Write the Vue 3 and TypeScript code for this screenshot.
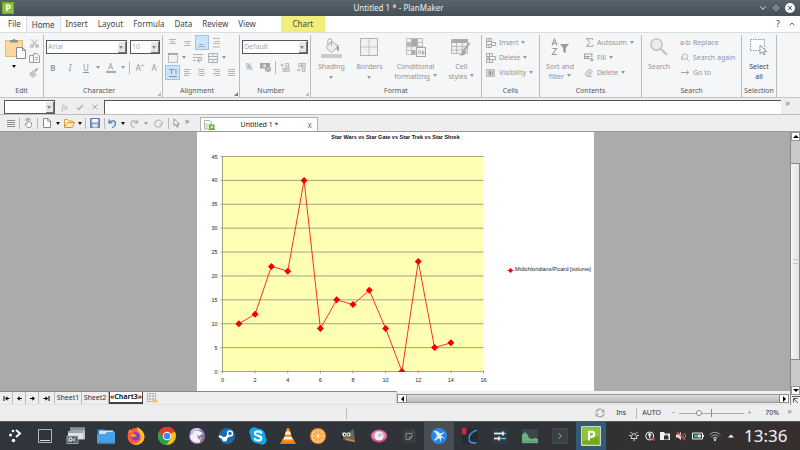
<script setup lang="ts">
import { computed, h, ref } from 'vue'

interface Glyph { w: number; h: number; body: string }

const glyphs: Record<string, Glyph> = {
  app: { w: 12, h: 12, body: '<rect width="12" height="12" fill="#76a91f"/><rect x="1" y="1" width="10" height="10" fill="#8cc63a"/><path d="M4.7 9V3.2h1.8a1.5 1.5 0 0 1 0 3.2H4.7" fill="none" stroke="#fff" stroke-width="1.5"/>' },
  down: { w: 8, h: 8, body: '<path d="M1.2 2.5 4 5.3 6.8 2.5" fill="none" stroke="#dfe3e6"/>' },
  diamond: { w: 8, h: 8, body: '<path d="M4 1.500 6.500 4 4 6.500 1.500 4z" fill="none" stroke="#cfd4d8"/>' },
  close: { w: 10, h: 10, body: '<circle cx="5" cy="5" r="5" fill="#fcfcfc"/><path d="M3 3 7 7M7 3 3 7" stroke="#4a545c" stroke-width="1"/>' },
  collapse: { w: 8, h: 8, body: '<path d="M1.5 5.3 4 3 6.5 5.3" fill="none" stroke="#666"/>' },
  paste: { w: 21, h: 21, body: '<rect x="0.5" y="2.5" width="17" height="16" fill="#fcd9a0" stroke="#e6bb78"/><path d="M5 4.5V2.3h2.3a1.8 1.8 0 0 1 3.4 0H13v2.2z" fill="#8d8f91"/><path d="M11.5 9.5h6l3 3v8h-9z" fill="#fff" stroke="#888"/><path d="M17.5 9.5v3h3" fill="none" stroke="#888"/>' },
  cut: { w: 9, h: 9, body: '<g fill="none" stroke="#a4a6a8"><path d="M1.3.5 6.3 6M7.7.5 2.7 6"/><circle cx="1.9" cy="7" r="1.4"/><circle cx="7.1" cy="7" r="1.4"/></g>' },
  copy: { w: 11, h: 11, body: '<g fill="#f5f6f8" stroke="#9c9ea0"><path d="M.5 2.5h4l2 2v5h-6z"/><path d="M4.5.5h3.500l2.500 2.500v6.500h-6z"/></g><path d="M6 4.500h3M6 6.500h3" stroke="#aaa"/>' },
  brush: { w: 10, h: 10, body: '<path d="M8.500.5 5.500 3.500" stroke="#aaa" stroke-width="2"/><path d="M3.300 2.300 7.700 6.700 6.500 7.500 2.500 3.500z" fill="#b0b2b4"/><path d="M2 4 6 8 3.500 9.500.3 6z" fill="#c4c6c8" stroke="#b5b7b9" stroke-width=".6"/>' },
  top: { w: 8, h: 10, body: '<path d="M0 1.500h7M1.500 3.500h4M0 5.500h7" stroke="#b3b5b7"/>' },
  middle: { w: 8, h: 10, body: '<path d="M0 3.500h7M1.500 5.500h4M0 7.500h7" stroke="#b3b5b7"/>' },
  bottom: { w: 8, h: 10, body: '<path d="M1.500 6.500h4M0 8.500h7" stroke="#94a9bf"/>' },
  spread: { w: 8, h: 10, body: '<path d="M0 .5h7M1.500 3.500h5M0 5.500h7M0 9h7" stroke="#b3b5b7"/>' },
  frame: { w: 10, h: 10, body: '<rect x=".5" y=".5" width="9" height="9" fill="#f0f1f2" stroke="#bbb"/><path d="M0 1h10" stroke="#999" stroke-width="1.500"/>' },
  wrap: { w: 10, h: 10, body: '<path d="M0 1.500h10M0 4.500h8.500v3H5M0 7.500h3" fill="none" stroke="#abadaf"/><path d="m6.500 5.500-2 2 2 2" fill="none" stroke="#999"/>' },
  merge: { w: 10, h: 10, body: '<path d="M.5.5h9v9h-9zM.5 3.500h9M.5 6.500h9M5 .5v3M5 6.500v3" fill="none" stroke="#adafb1"/>' },
  t1: { w: 10, h: 10, body: '<path d="M1 1.500h5M3.500 1.500V6M8 1.500V6M1 8.500h8" fill="none" stroke="#7e97b2"/><path d="M7 2.500 8 1.500" stroke="#7e97b2"/>' },
  left: { w: 8, h: 8, body: '<path d="M0 .5h7M0 2.500h5M0 4.500h7M0 6.500h5" stroke="#b3b5b7"/>' },
  center: { w: 8, h: 8, body: '<path d="M0 .5h7M1 2.500h5M0 4.500h7M1 6.500h5" stroke="#b3b5b7"/>' },
  right: { w: 8, h: 8, body: '<path d="M0 .5h7M2 2.500h5M0 4.500h7M2 6.500h5" stroke="#b3b5b7"/>' },
  justify: { w: 8, h: 8, body: '<path d="M0 .5h7M0 2.500h7M0 4.500h7M0 6.500h7" stroke="#b3b5b7"/>' },
  cash: { w: 11, h: 10, body: '<rect width="10" height="5.500" y="1" fill="#a2a4a6"/><circle cx="4.500" cy="3.700" r="1.500" fill="#e3e4e5"/><ellipse cx="8" cy="6" rx="2.500" ry="1.200" fill="#c8c9ca" stroke="#999" stroke-width=".6"/><path d="M5.500 6v2.500c0 1.500 5 1.500 5 0V6" fill="#b9babb" stroke="#999" stroke-width=".6"/>' },
  decPlus: { w: 9, h: 9, body: '<g fill="none" stroke="#a6a8aa" stroke-width=".9"><path d="M0 2h3M1.500.7 0 2 1.500 3.300"/><rect x="5" y=".6" width="2.600" height="3"/><rect x="2" y="5.300" width="2.400" height="3"/><rect x="5.800" y="5.300" width="2.400" height="3"/></g>' },
  decMinus: { w: 9, h: 9, body: '<g fill="none" stroke="#a6a8aa" stroke-width=".9"><path d="M0 7h3M1.700 5.700 3 7 1.700 8.300"/><rect x="2" y=".6" width="2.400" height="3"/><rect x="5.800" y=".6" width="2.400" height="3"/><rect x="5.200" y="5.300" width="2.600" height="3"/></g>' },
  shading: { w: 21, h: 20, body: '<rect x="0" y="16" width="21" height="4" fill="#c9cbcc"/><path d="M5 9.500 11 3l6 5.500-6.500 6z" fill="#eceded" stroke="#a5a7a9"/><path d="M10.500 8V2.500a1.800 1.800 0 0 0-3.600 0V7" fill="none" stroke="#a5a7a9"/><path d="M16 6.500c2 1 2.500 3.500 1.500 7-1.800-1-2-3-1.500-4.500z" fill="#999"/>' },
  borders: { w: 18, h: 18, body: '<rect x=".5" y=".5" width="17" height="17" fill="#f0f1f2" stroke="#b0b2b4"/><path d="M9 1v16M1 9h16" stroke="#c2c4c6"/>' },
  conditional: { w: 20, h: 19, body: '<path d="M.5.5h16v16H.5zM.5 4.500h16M.5 8.500h16M.5 12.500h16M5.500.5v16M11.500.5v16" fill="#eff0f1" stroke="#bcbec0"/><rect x="5.500" y="1" width="6" height="7" fill="#a8aaac"/><rect x="1" y="5" width="5" height="3" fill="#b5b7b9"/><rect x="5.500" y="12.500" width="4" height="4" fill="#a8aaac"/><rect x="10.500" y="9.500" width="9" height="9" fill="#f3f3f4" stroke="#a3a5a7"/><path d="m12 16 1.500-4 1.500 4M16.500 12v4h1.500v-2h-1.500" fill="none" stroke="#999" stroke-width=".8"/>' },
  cellstyle: { w: 20, h: 19, body: '<path d="M.5 2.500h16v13H.5zM.5 8.500h16M.5 12h16M5.500 4v11M11.500 4v11" fill="#eff0f1" stroke="#b8babc"/><rect x=".5" y="1" width="16.500" height="4" fill="#a9abad"/><path d="m18.500 5-6 8" stroke="#a3a5a7" stroke-width="2"/><path d="M13 12c-2 .5-3 2-2 3-1 1.500-2 1.500-3 2 3 1.500 7 0 7-3z" fill="#a0a2a4"/>' },
  insCell: { w: 10, h: 10, body: '<path d="M.5.5h5v3h-5zM.5 3.500h5v3h-5zM.5 6.500h5v3h-5zM3 .5v3M3 6.500v3M5.500 4.500h4v3h-4z" fill="none" stroke="#a6a8aa"/>' },
  delCell: { w: 10, h: 10, body: '<path d="M.5.5h6v3h-6zM.5 6.500h6v3h-6zM3.500.5v3M3.500 6.500v3M3.500 3.500h6v3h-6z" fill="none" stroke="#a6a8aa"/><path d="M0 5h4" stroke="#999"/>' },
  visCell: { w: 10, h: 8, body: '<rect x=".5" y=".5" width="8" height="7" fill="#d6d7d8" stroke="#bcbec0"/><path d="M2 2.500 4 4 2 5.500M7.500 2 6 4l1.500 2M4.500 1v6" fill="none" stroke="#909294"/>' },
  sort: { w: 18, h: 18, body: '<g fill="none" stroke="#999b9d" stroke-width="1.100"><path d="M1 7.500 3.500 1 6 7.500M2 5.500h3"/><path d="M1.300 10.500h4.400L1.300 16.500h4.700"/></g><path d="M9 6h9l-3.200 4v5l-2.600-1V10z" fill="#999b9d"/>' },
  sum: { w: 9, h: 9, body: '<path d="M7.500 2V.7H1.500L4.800 4.500 1.500 8.300h6V7" fill="none" stroke="#9da0a2"/>' },
  fill: { w: 10, h: 9, body: '<path d="M0 1h8.500M0 3.500h6M0 5.500h6M.5 1v4.500M3.500 3.500v2M7.800 1v7" fill="none" stroke="#9da0a2"/><path d="m5.800 6 2 2.300 2-2.300" fill="none" stroke="#9da0a2"/>' },
  erase: { w: 10, h: 9, body: '<path d="M1 6 5.500 1 8.500 3.500 4.500 8H2.500z" fill="#e2e3e4" stroke="#b0b2b4"/><path d="M3.500 3.500 6.500 6M4 8.500h4" stroke="#b0b2b4"/>' },
  search: { w: 18, h: 18, body: '<circle cx="6.500" cy="6.500" r="5.700" fill="#ebecee" stroke="#b7b9bb" stroke-width="1.200"/><path d="m11 11 6 6" stroke="#bbbdbf" stroke-width="2"/>' },
  again: { w: 9, h: 9, body: '<circle cx="4" cy="3.700" r="2.800" fill="#f3f4f5" stroke="#b8babc"/><path d="m6 6 2.500 2.500M0 3v3h2" fill="none" stroke="#b4b6b8"/>' },
  goto: { w: 9, h: 9, body: '<path d="M0 4.500h7.500M5.500 2.500l2.300 2-2.300 2" fill="none" stroke="#a2a4a6"/>' },
  select: { w: 18, h: 18, body: '<rect x=".5" y="1.500" width="14" height="11" fill="#fdfdfe" stroke="#7e9cc0" stroke-dasharray="1.500 1"/><path d="M10 7v9l2.200-2 1.800 3 1-.6-1.400-2.900h3.200z" fill="#fff" stroke="#999"/>' },
  check: { w: 8, h: 8, body: '<path d="M1 4.500 3 6.500 7 1.800" fill="none" stroke="#acacac" stroke-width="1.200"/>' },
  cross: { w: 8, h: 8, body: '<path d="m1.500 1.500 5 5m0-5-5 5" fill="none" stroke="#acacac"/>' },
  lines: { w: 8, h: 9, body: '<path d="M0 1.500h8M0 3.500h8M0 5.500h8M0 7.500h8" stroke="#8c8c8c"/>' },
  hand: { w: 9, h: 10, body: '<path d="M3 6V1.500c0-1 1.300-1 1.300 0V4l3.200.8v3L6.500 9.500H3.500L1 6.500c0-1 1-1 2 0z" fill="#fff" stroke="#888" stroke-width=".8"/><path d="M1 2.500C2-.3 6-.3 6.500 2.500" fill="none" stroke="#6f94bd" stroke-width=".8"/>' },
  doc: { w: 8, h: 10, body: '<path d="M.5.5h4.500l2.500 2.500v6.500h-7z" fill="#fff" stroke="#888"/><path d="M4.800.5v2.700h2.700" fill="none" stroke="#888"/>' },
  folder: { w: 11, h: 9, body: '<path d="M.5 8.500v-8h3l1 1.500h4v1.500" fill="#fff" stroke="#d99c33"/><path d="M.5 8.500 3 3.500h7.500l-2 5z" fill="#fde7bd" stroke="#e09b2d"/>' },
  save: { w: 10, h: 10, body: '<path d="M.5.5h9v9h-9z" fill="#7d9cc6" stroke="#6482ab"/><rect x="2" y="1" width="6" height="3.500" fill="#f3f6fa"/><rect x="2.500" y="6" width="5" height="3.500" fill="#dce5ef"/>' },
  undo: { w: 9, h: 9, body: '<path d="M1 .5v3.500h3.500M1.200 3.800C3 1 7.700 1.300 7.500 4.500c0 2-2 3.500-3.500 4.200" fill="none" stroke="#4a7db8" stroke-width="1.200"/>' },
  redo: { w: 9, h: 9, body: '<path d="M7.500.5v3.500H4M7.300 3.800C5.500 1 1 1.300 1 4.500c0 2 2 3.500 3.500 4.200" fill="none" stroke="#b4b4b4" stroke-width="1.200"/>' },
  repeat: { w: 9, h: 9, body: '<path d="M7.800 4.800A3.500 3.500 0 1 1 6.700 2M8.300 2v3H5.500" fill="none" stroke="#b4b4b4" stroke-width="1.100"/>' },
  pointer: { w: 8, h: 10, body: '<path d="M1 .8v7L2.800 6.300 4.200 9.300 5.300 8.800 4 6h2.400z" fill="#fff" stroke="#888" stroke-width=".9"/>' },
  sheetdoc: { w: 11, h: 10, body: '<path d="M.5.5h5l2 2v6.500h-7z" fill="#fff" stroke="#8eaa7e" stroke-width=".8"/><path d="M1 4.500h6M1 6.500h6M3 3v6" stroke="#b5c9a8" stroke-width=".7"/><rect x="5" y="4.500" width="5.500" height="5.500" fill="#62ad2c"/><path d="M7 9V6h1.500v1.500H7" fill="none" stroke="#fff" stroke-width=".7"/>' },
  newsheet: { w: 11, h: 10, body: '<path d="M.5.5h8v8h-8zM.5 3h8M.5 6h8M3 .5v8M6 .5v8" fill="#fff" stroke="#999" stroke-width=".7"/><path d="M8.500 5.500v4.500M6.300 7.800h4.500" stroke="#f1c84c" stroke-width="1.700"/>' },
  first: { w: 7, h: 7, body: '<path d="M1 1v5" stroke="#000"/><path d="M4.500 1.200 2 3.500l2.500 2.300z"/><path d="M4 3.500h2.500" stroke="#000"/>' },
  prev: { w: 7, h: 7, body: '<path d="M3.700 1.200 1 3.500l2.700 2.300z"/><path d="M3 3.500h3" stroke="#000"/>' },
  next: { w: 7, h: 7, body: '<path d="m3.300 1.200 2.700 2.300-2.700 2.300z"/><path d="M1 3.500h3" stroke="#000"/>' },
  last: { w: 7, h: 7, body: '<path d="M6 1v5" stroke="#000"/><path d="M2.500 1.200 5 3.500 2.500 5.800z"/><path d="M.5 3.500H3" stroke="#000"/>' },
  sync: { w: 10, h: 10, body: '<path d="M1 4.500C1.500.7 6.500 0 8.300 3M9 5.500C8.500 9.300 3.500 10 1.700 7" fill="none" stroke="#aaa" stroke-width="1.400"/><path d="M9.500 1v3.500H6zM.5 9V5.500H4z" fill="#aaa"/>' },
  corner: { w: 8, h: 8, body: '<path d="M0 .5h8M1.500 2.500h4M1.500 2.500v4M2 3l4 4" stroke="#555" fill="none"/>' },

  plasma: { w: 20, h: 20, body: '<g fill="#fff"><circle cx="5.500" cy="9" r="1.500"/><circle cx="8" cy="5" r="1.300"/><circle cx="8.500" cy="14.500" r="1.800"/></g><path d="m11 4 4 3.500-4 3.500" fill="none" stroke="#fff" stroke-width="2"/>' },
  desktop: { w: 20, h: 20, body: '<rect x="3.500" y="3.500" width="13" height="13" fill="none" stroke="#aeb4b8"/><path d="M5 14.500h10" stroke="#d6dadd"/>' },
  windows: { w: 20, h: 20, body: '<rect x="4" y="1.500" width="15" height="12" fill="#b9c1c6"/><rect x="4" y="1.500" width="15" height="3" fill="#838e95"/><rect x="2" y="5" width="15" height="8" fill="#dce2e5"/><rect x="2" y="5" width="15" height="2" fill="#97a3ab"/><rect x="1" y="10" width="11" height="7.500" fill="#4f565b" stroke="#c9cdcf" stroke-width=".7"/><path d="M3 12h3v3H3zM9.500 11.500 7.500 14l2 2" fill="none" stroke="#fff"/>' },
  files: { w: 20, h: 20, body: '<path d="M1 3h7l2 2h9v5H1z" fill="#1f6fb4"/><rect x="3" y="4.500" width="14" height="4" fill="#d3e6f5"/><path d="M1 8h8l2-2h8v12H1z" fill="#49a2e6"/><path d="M1 16.500h18V18H1z" fill="#2d83c7"/>' },
  firefox: { w: 20, h: 20, body: '<circle cx="10" cy="10.500" r="8.500" fill="#ff5b35"/><path d="M11 1c3.500 2 7.500 5 7.500 10A8.500 8.500 0 0 1 5 17c7 2 11-2 9.500-8-.8-3-4-4-3.500-8z" fill="#ffc12e"/><path d="M2 7 3.500 3l3 3z" fill="#ff8a2b"/><circle cx="9.500" cy="10.500" r="4.200" fill="#7a3fd0"/><path d="M5 8c2-1.500 5 .5 6 2-2 0-2 2-5 1z" fill="#ff9a2c"/>' },
  chrome: { w: 20, h: 20, body: '<circle cx="10" cy="10" r="9" fill="#fbc116"/><path d="M10 10 2.200 5.500A9 9 0 0 1 17.800 5.500z" fill="#e33b2e"/><path d="M2.200 5.500A9 9 0 0 0 9.500 19L13.900 12 10 10z" fill="#2ba24c"/><path d="M10 6h8.100a9 9 0 0 0-16-.4L6 11z" fill="#e33b2e"/><circle cx="10" cy="10" r="4.300" fill="#fff"/><circle cx="10" cy="10" r="3.300" fill="#4285f4"/>' },
  bird: { w: 20, h: 20, body: '<circle cx="10" cy="10" r="8" fill="#8a79b7"/><path d="M3 12C3.500 6 8 3.500 12.500 5l3.500 2.500-3.500 2c2 1.500 2.500 5 0 7-4 .8-8-.5-9.500-4.500z" fill="#f1eef5"/><path d="M3.500 5.500c2.500-4 8-4.500 11-1.500-4-.5-7.500.5-9 5z" fill="#cfc5e2"/><path d="m10 9 4 2-2 3z" fill="#8a79b7"/><path d="m13 13 4 1-4 2.500z" fill="#b9874c"/>' },
  steam: { w: 20, h: 20, body: '<circle cx="10" cy="10" r="8" fill="#1a6cae"/><path d="m2 10 6 3 5-5" fill="none" stroke="#fff" stroke-width="2.500"/><circle cx="13" cy="7.500" r="3.200" fill="#fff"/><circle cx="13" cy="7.500" r="1.700" fill="#1a6cae"/><circle cx="7.700" cy="13.200" r="2.400" fill="#fff"/>' },
  skype: { w: 20, h: 20, body: '<circle cx="10" cy="10" r="7.600" fill="#12a5e9"/><circle cx="6" cy="6" r="4.700" fill="#12a5e9"/><circle cx="14" cy="14" r="4.700" fill="#12a5e9"/><path d="M13.500 7.500C12.500 4.500 6.800 4.800 6.800 7.500c0 3 6.500 1.500 6.500 4.700 0 3-6 3.200-7-.2" fill="none" stroke="#fff" stroke-width="2.100"/>' },
  vlc: { w: 20, h: 20, body: '<path d="M4.500 13h11l2.500 5H2z" fill="#f27c0b"/><path d="M9 2h2l4 13c-2 1.800-8 1.800-10 0z" fill="#f7931e"/><path d="M7.900 5.500h4.200l.9 3H7zM6 11h8l.9 2.500H5.200z" fill="#f4f1ec"/>' },
  orange: { w: 20, h: 20, body: '<circle cx="10" cy="10" r="8" fill="#f38a1d"/><circle cx="10" cy="10" r="6.600" fill="#fde0b2"/><circle cx="10" cy="10" r="5.700" fill="#f7a03a"/><path d="M10 4v12M4 10h12M6 6l8 8M14 6l-8 8" stroke="#fde0b2" stroke-width=".9"/>' },
  gimp: { w: 20, h: 20, body: '<path d="M3.500 5c2 1.500 5 2.500 8 1l4-3 1.500 11c-3 2-8 2-12-1z" fill="#71665b"/><circle cx="6.500" cy="8.500" r="2" fill="#fff"/><circle cx="10.500" cy="8.500" r="2" fill="#fff"/><circle cx="6.800" cy="8.600" r=".9" fill="#111"/><circle cx="10.300" cy="8.500" r=".9" fill="#111"/><path d="m8 13 9 2.500" stroke="#d28b3f" stroke-width="1.300"/><circle cx="4" cy="11.500" r="1.200" fill="#1a1a1a"/>' },
  pinkeye: { w: 20, h: 20, body: '<ellipse cx="10" cy="10" rx="8.300" ry="6.500" fill="#d0508f"/><ellipse cx="10" cy="9.500" rx="7" ry="5" fill="#e08ab5"/><circle cx="10" cy="10" r="4.500" fill="#f4edf1"/><circle cx="11" cy="9" r="2" fill="#c9c4c9"/>' },
  darkdoc: { w: 20, h: 20, body: '<path d="M4 3h9l4 4v10H4z" fill="#3b3d3f"/><path d="M13 3v4h4z" fill="#4c4f52"/><path d="M7 7.500h6v3.500l-2.500 2.500H7zM10.500 13.500V11H13" fill="none" stroke="#999c9e" stroke-width=".8"/>' },
  kite: { w: 20, h: 20, body: '<circle cx="10" cy="10" r="8" fill="#2787e8"/><path d="M4 4.500 9 5.500l2 2L16 6l-4 3.500 4 3.500-4-1.500V16l-2-4-5 3.500 3-5.500-1-2.500z" fill="#dff1ff"/><path d="m9 10-4 4" stroke="#9bd0ff"/>' },
  krita: { w: 20, h: 20, body: '<rect x="2" y="2" width="16" height="16" fill="#252b35"/><path d="M2 2h4.500v4.500L5 9 2 8z" fill="#c62b41"/><path d="M17 4c-6 2-9 6-7.500 11 .5 2 3 2 7 2" fill="none" stroke="#3c8fd6" stroke-width="1.600"/>' },
  mixer: { w: 20, h: 20, body: '<rect x="2" y="2" width="16" height="16" fill="#32383d"/><path d="M4 7.500h12M4 12.500h12" stroke="#5fb7e8" stroke-width="1.300"/><path d="M4 7.500h9M4 12.500h5" stroke="#f3f3f3" stroke-width="1.300"/><path d="M13 5.500v4M9 10.500v4" stroke="#fff" stroke-width="1.500"/>' },
  monitor: { w: 20, h: 20, body: '<rect x="2" y="3" width="16" height="15" fill="#3c4649"/><path d="M2 17V9l3-3 3 3 1 3 3 1 3-1 3 1v4z" fill="#6fae84"/><path d="M2 15.500h16" stroke="#4c9e70"/>' },
  konsole: { w: 20, h: 20, body: '<rect x="2.500" y="2.500" width="15" height="15" fill="#394145" stroke="#40494e"/><path d="m8.500 7.500 3 2.500-3 2.500" fill="none" stroke="#a0a6a9"/>' },
  planmaker: { w: 20, h: 20, body: '<rect x=".7" y=".7" width="18.600" height="18.600" fill="#76a91f" stroke="#eef5dd"/><path d="M2 2h16v8L2 15z" fill="#8fc43a"/><path d="M8 14.500V5.800h2.700a2.300 2.300 0 0 1 0 5H8" fill="none" stroke="#fff" stroke-width="2.100"/>' },

  bell: { w: 10, h: 10, body: '<path d="M2 7.500C3 6 2.500 2.500 5 2.500S7 6 8 7.500zM4 9h2M1.500 1 3 2.500M8.500 1 7 2.500M0 4.500h2M8 4.500h2" fill="none" stroke="#e8e8e8" stroke-width=".9"/>' },
  update: { w: 10, h: 10, body: '<circle cx="4.700" cy="5" r="4" fill="none" stroke="#eee"/><path d="M4.700 7.500V2.500M3.200 4.300 4.700 2.500 6.200 4.300" fill="none" stroke="#eee" stroke-width="1.300"/><circle cx="8" cy="8" r="1.800" fill="#da4453"/>' },
  vault: { w: 10, h: 10, body: '<path d="M0 1h4l1 1.500h5V9H0z" fill="#f4f4f4"/><rect x="4" y="5" width="4.500" height="3.500" fill="#333"/><path d="M5 5V4h2.500v1" fill="none" stroke="#333" stroke-width=".8"/>' },
  mute: { w: 10, h: 10, body: '<path d="M0 3.500h2L5 1v8L2 6.500H0z" fill="#e8dede"/><path d="M6.500 3.500c1 1 1 2 0 3M8 2c2 2 2 4 0 6" fill="none" stroke="#999"/><path d="m1 1 8 8" stroke="#da4453" stroke-width="1.200"/>' },
  battery: { w: 12, h: 10, body: '<path d="M.5 2h10v6H.5z" fill="none" stroke="#eee"/><rect x="2" y="3.500" width="4" height="3" fill="#44b085"/><rect x="6" y="3.500" width="3" height="3" fill="#ddd"/><path d="M11.500 4v2" stroke="#eee"/>' },
  wifi: { w: 12, h: 10, body: '<g fill="none" stroke="#a4a4a4"><path d="M.5 4C3.500.5 8.500.5 11.500 4M2.300 5.800c2-2.400 5.400-2.400 7.400 0"/><path d="M4 7.500c1-1.200 3-1.200 4 0" stroke="#eee"/></g><circle cx="6" cy="9" r="1" fill="#fff"/>' },
  up: { w: 8, h: 10, body: '<path d="m1 6.500 3-3 3 3z" fill="#f2f2f2"/>' },
}

const Icon = (p: { name: string }) => {
  const g = glyphs[p.name]
  return h('svg', { width: g.w, height: g.h, viewBox: `0 0 ${g.w} ${g.h}`, 'aria-hidden': 'true', innerHTML: g.body })
}
Icon.props = ['name']

const menus = ['File', 'Home', 'Insert', 'Layout', 'Formula', 'Data', 'Review', 'View']
const activeMenu = ref('Home')
const cellRows = [['insCell', 'Insert'], ['delCell', 'Delete'], ['visCell', 'Visibility']]
const contentRows = [['sum', 'Autosum'], ['fill', 'Fill'], ['erase', 'Delete']]
const searchRows = [['', 'Replace'], ['again', 'Search again'], ['goto', 'Go to']]
const aligns = ['left', 'center', 'right', 'justify']
const sheets = ['Sheet1', 'Sheet2', '«Chart3»']
const activeSheet = ref('«Chart3»')
const zoom = ref(70)
const apps = ['plasma', 'desktop', 'windows', 'files', 'firefox', 'chrome', 'bird', 'steam', 'skype', 'vlc',
  'orange', 'gimp', 'pinkeye', 'darkdoc', 'kite', 'krita', 'mixer', 'monitor', 'konsole', 'planmaker']
const tray = ['bell', 'update', 'vault', 'mute', 'battery', 'wifi', 'up']

// The chart is drawn on a 794 x 518 sheet and shown at half size.
const values = [10, 12, 22, 21, 40, 9, 15, 14, 17, 9, 0, 23, 5, 6]
const plot = { x: 51, y: 49, w: 522, h: 430 }
const px = (v: number) => plot.x + (v / 16) * plot.w
const py = (v: number) => plot.y + plot.h - (v / 45) * plot.h
const yTicks = Array.from({ length: 10 }, (_, i) => i * 5)
const xTicks = Array.from({ length: 9 }, (_, i) => i * 2)
const points = computed(() => values.map((v, i) => ({ x: px(i + 1), y: py(v) })))
const line = computed(() => points.value.map(p => `${p.x},${p.y}`).join(' '))
</script>

<template>
  <div class="window">
    <header class="title">
      <Icon name="app" />
      <h1>Untitled 1 * - PlanMaker</h1>
      <div class="winbtns">
        <button aria-label="Minimize"><Icon name="down" /></button>
        <button aria-label="Maximize"><Icon name="diamond" /></button>
        <button aria-label="Close"><Icon name="close" /></button>
      </div>
    </header>

    <nav class="menu">
      <button v-for="m in menus" :key="m" :class="{ on: m === activeMenu }" @click="activeMenu = m">{{ m }}</button>
      <button class="chart-tab">Chart</button>
      <span class="grow"></span>
      <button class="help">?</button>
      <button class="fold" aria-label="Collapse ribbon"><Icon name="collapse" /></button>
    </nav>

    <section class="ribbon">
      <div class="group">
        <div class="edit">
          <button class="paste" aria-label="Paste"><Icon name="paste" /><i class="caret dark"></i></button>
          <div class="clip">
            <button aria-label="Cut"><Icon name="cut" /></button>
            <button aria-label="Copy"><Icon name="copy" /></button>
            <button aria-label="Format painter"><Icon name="brush" /></button>
          </div>
        </div>
        <h2>Edit</h2>
      </div>

      <div class="group">
        <div class="fonts">
          <div class="combo wide"><select aria-label="Font"><option>Arial</option></select><i class="drop"></i></div>
          <div class="combo"><select aria-label="Font size"><option>10</option></select><i class="drop"></i></div>
        </div>
        <div class="letters">
          <button><b>B</b></button>
          <button><em>I</em></button>
          <button><u>U</u></button>
          <i class="caret"></i>
          <button class="tint">A</button>
          <i class="caret"></i>
          <i class="bar"></i>
          <button>A<sup>+</sup></button>
          <button>A<sup>-</sup></button>
        </div>
        <h2 class="corner">Character</h2>
      </div>

      <div class="group">
        <div class="align">
          <div>
            <button aria-label="Top"><Icon name="top" /></button>
            <button aria-label="Middle"><Icon name="middle" /></button>
            <button class="sel" aria-label="Bottom"><Icon name="bottom" /></button>
            <button aria-label="Spread"><Icon name="spread" /></button>
          </div>
          <div class="cells">
            <button aria-label="Cell frame"><Icon name="frame" /></button>
            <i class="caret"></i>
            <button aria-label="Wrap text"><Icon name="wrap" /></button>
            <button aria-label="Merge cells"><Icon name="merge" /></button>
            <i class="caret"></i>
          </div>
          <div>
            <button class="sel" aria-label="Text direction"><Icon name="t1" /></button>
            <button v-for="a in aligns" :key="a" :aria-label="a"><Icon :name="a" /></button>
          </div>
        </div>
        <h2 class="corner strong">Alignment</h2>
      </div>

      <div class="group">
        <div class="fonts">
          <div class="combo wide"><select aria-label="Number format"><option>Default</option></select><i class="drop"></i></div>
        </div>
        <div class="numbers">
          <button>%</button>
          <button aria-label="Currency"><Icon name="cash" /></button>
          <i class="bar"></i>
          <button aria-label="More decimals"><Icon name="decPlus" /></button>
          <button aria-label="Fewer decimals"><Icon name="decMinus" /></button>
        </div>
        <h2 class="corner">Number</h2>
      </div>

      <div class="group">
        <div class="format">
          <button class="big"><span class="pic"><Icon name="shading" /></span>Shading<i class="caret"></i></button>
          <button class="big"><span class="pic"><Icon name="borders" /></span>Borders<i class="caret"></i></button>
          <button class="big"><span class="pic"><Icon name="conditional" /></span>Conditional<span>formatting<i class="caret in"></i></span></button>
          <button class="big"><span class="pic"><Icon name="cellstyle" /></span>Cell<span>styles<i class="caret in"></i></span></button>
        </div>
        <h2>Format</h2>
      </div>

      <div class="group">
        <div class="rows">
          <button v-for="r in cellRows" :key="r[1]"><span class="mini"><Icon :name="r[0]" /></span>{{ r[1] }}<i class="caret in"></i></button>
        </div>
        <h2>Cells</h2>
      </div>

      <div class="group">
        <div class="split">
          <button class="big"><span class="pic"><Icon name="sort" /></span>Sort and<span>filter<i class="caret in"></i></span></button>
          <div class="rows">
            <button v-for="r in contentRows" :key="r[1]"><span class="mini"><Icon :name="r[0]" /></span>{{ r[1] }}<i class="caret in"></i></button>
          </div>
        </div>
        <h2>Contents</h2>
      </div>

      <div class="group">
        <div class="split narrow">
          <button class="big"><span class="pic"><Icon name="search" /></span>Search</button>
          <div class="rows">
            <button v-for="r in searchRows" :key="r[1]"><span class="mini"><Icon v-if="r[0]" :name="r[0]" /><template v-else>a›b</template></span>{{ r[1] }}</button>
          </div>
        </div>
        <h2>Search</h2>
      </div>

      <div class="group">
        <div class="format">
          <button class="big live"><span class="pic"><Icon name="select" /></span>Select<span>all</span></button>
        </div>
        <h2>Selection</h2>
      </div>
    </section>

    <section class="formula">
      <div class="combo name"><select aria-label="Cell name"></select><i class="drop"></i></div>
      <button class="fx">fx</button>
      <button aria-label="Accept"><Icon name="check" /></button>
      <button aria-label="Cancel"><Icon name="cross" /></button>
      <input type="text" aria-label="Formula">
      <button class="more">»</button>
    </section>

    <section class="tools">
      <div class="quick">
        <button aria-label="Menu"><Icon name="lines" /></button>
        <i class="bar"></i>
        <button aria-label="Touch mode"><Icon name="hand" /></button>
        <i class="bar"></i>
        <button aria-label="New"><Icon name="doc" /></button>
        <i class="caret dark"></i>
        <button aria-label="Open"><Icon name="folder" /></button>
        <i class="caret dark"></i>
        <i class="bar"></i>
        <button aria-label="Save"><Icon name="save" /></button>
        <i class="bar"></i>
        <button aria-label="Undo"><Icon name="undo" /></button>
        <i class="caret dark"></i>
        <button aria-label="Redo"><Icon name="redo" /></button>
        <i class="caret"></i>
        <button aria-label="Repeat"><Icon name="repeat" /></button>
        <i class="bar"></i>
        <button aria-label="Select objects"><Icon name="pointer" /></button>
        <button class="more">»</button>
      </div>
      <div class="doc">
        <Icon name="sheetdoc" />
        <span>Untitled 1 *</span>
        <button aria-label="Close document">x</button>
      </div>
    </section>

    <main class="work">
      <div class="canvas">
        <svg class="page" width="397" height="259" viewBox="0 0 794 518" role="img" aria-label="Line chart">
          <rect width="794" height="518" fill="#fff" />
          <text x="397" y="14" text-anchor="middle" class="heading">Star Wars vs Star Gate vs Star Trek vs Star Shrek</text>
          <rect :x="plot.x" :y="plot.y" :width="plot.w" :height="plot.h" fill="#ffffb4" />
          <g v-for="t in yTicks" :key="'y' + t">
            <line :x1="plot.x - 4" :x2="plot.x + plot.w" :y1="py(t)" :y2="py(t)" class="grid" />
            <text :x="plot.x - 10" :y="py(t) + 4" text-anchor="end">{{ t }}</text>
          </g>
          <line :x1="plot.x" :x2="plot.x" :y1="plot.y" :y2="plot.y + plot.h" class="grid" />
          <g v-for="t in xTicks" :key="'x' + t">
            <line :x1="px(t)" :x2="px(t)" :y1="py(0) - 2" :y2="py(0) + 4" class="grid" />
            <text :x="px(t)" :y="py(0) + 21" text-anchor="middle">{{ t }}</text>
          </g>
          <clipPath id="area"><rect x="0" y="0" width="794" :height="plot.y + plot.h + 1" /></clipPath>
          <g clip-path="url(#area)">
            <polyline :points="line" fill="none" stroke="#f4341c" stroke-width="2" />
            <path v-for="(p, i) in points" :key="i" :d="`M${p.x} ${p.y - 7}l7 7-7 7-7-7z`" fill="#f00000" />
          </g>
          <path d="M619 277h16" stroke="#f4341c" stroke-width="1" />
          <path d="M627 272l5 5-5 5-5-5z" fill="#f00000" />
          <text x="636" y="278">Midichloridians/Picard [volume]</text>
        </svg>
      </div>
      <div class="vscroll">
        <button aria-label="Scroll up"><i class="tri up"></i></button>
        <div class="vtrack"><div class="vthumb"><i class="grip"></i></div></div>
        <button aria-label="Scroll down"><i class="tri dn"></i></button>
        <Icon name="corner" />
      </div>
      <div class="bottom">
        <div class="sheets">
          <button v-for="n in ['first', 'prev', 'next', 'last']" :key="n" class="nav" :aria-label="n"><Icon :name="n" /></button>
          <button v-for="s in sheets" :key="s" class="sheet" :class="{ on: s === activeSheet }" @click="activeSheet = s">{{ s }}</button>
          <button class="add" aria-label="New sheet"><Icon name="newsheet" /></button>
        </div>
        <div class="hscroll">
          <button aria-label="Scroll left"><i class="tri lt"></i></button>
          <div class="htrack"></div>
          <button aria-label="Scroll right"><i class="tri rt"></i></button>
        </div>
      </div>
    </main>

    <section class="status">
      <span class="pane"></span>
      <Icon name="sync" />
      <span class="ins">Ins</span>
      <i class="bar"></i>
      <span class="auto">AUTO</span>
      <button aria-label="Zoom out">−</button>
      <input v-model="zoom" type="range" min="20" max="190" aria-label="Zoom">
      <button aria-label="Zoom in">+</button>
      <output>{{ zoom }}%</output>
      <button class="more">»</button>
    </section>

    <footer class="taskbar">
      <div class="apps">
        <button v-for="a in apps" :key="a" :class="{ raised: a === 'kite', current: a === 'planmaker' }" :aria-label="a"><Icon :name="a" /></button>
      </div>
      <div class="tray"><Icon v-for="t in tray" :key="t" :name="t" /></div>
      <time>13:36</time>
    </footer>
  </div>
</template>

<style>
body { margin: 0; }
</style>

<style scoped>
* { box-sizing: border-box; }
.window { min-height: 100vh; display: flex; flex-direction: column; background: #eee; color: #4c4f52; font: 7px/10px "Noto Sans", sans-serif; }
button { font: inherit; color: inherit; background: none; border: 0; padding: 0; margin: 0; display: flex; align-items: center; justify-content: center; white-space: nowrap; }
h1, h2 { margin: 0; font: inherit; }
svg { display: block; flex: none; }
.grow { flex: 1; }
.caret { width: 0; height: 0; border: 2px solid transparent; border-top: 3px solid #999; border-bottom: 0; justify-self: center; align-self: center; }
.caret.dark { border-top-color: #111; }
.caret.in { display: inline-block; margin-left: 3px; vertical-align: 2px; align-self: center; }
.bar { width: 1px; height: 11px; background: #b8b8b8; align-self: center; justify-self: center; }

.title { height: 16px; display: grid; grid-template-columns: 1fr auto 1fr; align-items: center; padding: 0 5px 0 2px; background: linear-gradient(#59646d, #474f56); color: #eff1f2; font-size: 8px; }
.winbtns { display: flex; justify-content: flex-end; gap: 5px; }

.menu { height: 17px; display: flex; background: #fff; border-bottom: 1px solid #dcdedf; color: #444; padding-left: 3px; }
.menu button { padding: 0 5px; font-size: 8px; }
.menu .on { background: #f5f6f8; border: 1px solid #dcdedf; border-bottom: 0; }
.menu .chart-tab { background: #f0ef7c; margin-left: 20px; width: 44px; }
.menu .help, .menu .fold { font-size: 9px; padding: 0 4px; }

.ribbon { height: 65px; display: grid; grid-template-columns: 44px 119px 77px 71px 171px 58px 102px 100px 35px; background: #f5f6f8; border-bottom: 1px solid #c3c4c5; color: #929496; }
.group { position: relative; display: flex; flex-direction: column; border-right: 1px solid #b9bbbd; margin-top: 2px; min-width: 0; }
.group h2 { margin-top: auto; text-align: center; color: #555759; white-space: nowrap; padding-bottom: 1px; }
.group .corner { padding-right: 8px; }
.corner::after { content: ""; position: absolute; right: 1px; bottom: 1px; border: 2px solid transparent; border-right-color: #bbb; border-bottom-color: #bbb; }
.corner.strong::after { border-right-color: #777; border-bottom-color: #777; }
.edit { display: flex; padding: 3px 0 0 5px; gap: 2px; }
.paste { flex-direction: column; justify-content: flex-start; gap: 6px; }
.paste .caret { margin-right: 4px; }
.clip { display: flex; flex-direction: column; gap: 5px; align-items: center; }
.clip button { height: 10px; width: 12px; }

.fonts { display: flex; gap: 3px; padding: 5px 2px 0; }
.combo { position: relative; display: flex; width: 30px; height: 14px; background: #fff; border: 1px solid #55585a; }
.combo.wide { flex: 1; }
.combo select { appearance: none; width: 100%; border: 0; background: none; padding: 0 0 0 1px; font: inherit; color: #a8a8a8; }
.drop { position: absolute; top: 1px; right: 0; bottom: 0; width: 8px; background: #e6e6e6; border-right: 1px solid #777; border-bottom: 1px solid #777; }
.drop::after { content: ""; position: absolute; left: 1px; top: 4px; border: 2px solid transparent; border-top: 3px solid #888; border-bottom: 0; }
.letters { display: grid; grid-template-columns: 18px 16px 16px 7px 19px 6px 7px 14px 16px; padding-top: 5px; height: 22px; font-size: 8px; align-items: center; }
.letters b { font-weight: 600; }
.letters sup { font-size: 6px; line-height: 6px; align-self: flex-start; }
.letters .tint { justify-self: center; border-bottom: 2px solid #aaa; width: 10px; height: 10px; }
.letters .bar, .numbers .bar { height: 13px; }
.align { display: flex; flex-direction: column; }
.align > div { display: grid; grid-template-columns: 15px 15px 14px 15px 15px; height: 15px; padding-left: 2px; align-items: center; }
.align > .cells { grid-template-columns: 15px 8px 20px 10px 11px; }
.align button { height: 15px; }
.align .sel { background: #cde3fa; border: 1px solid #9cc3ec; }
.numbers { display: grid; grid-template-columns: 18px 14px 6px 15px 16px; padding-top: 6px; height: 20px; align-items: center; font-size: 8px; }
.format { display: flex; justify-content: space-around; padding: 0 1px; }
.big { flex-direction: column; justify-content: flex-start; padding-top: 3px; line-height: 10px; }
.pic { height: 20px; margin-bottom: 4px; display: block; }
.big > .caret { margin-top: 4px; }
.live { color: #444; }
.rows { display: flex; flex-direction: column; align-items: flex-start; padding-left: 4px; }
.rows button { height: 15px; }
.mini { width: 10px; margin-right: 3px; display: flex; justify-content: center; }
.split { display: grid; grid-template-columns: 40px 1fr; }
.split.narrow { grid-template-columns: 34px 1fr; }

.formula { height: 17px; display: flex; align-items: flex-end; border-bottom: 1px solid #bfbfbf; padding: 0 0 0 4px; color: #aaa; }
.formula button { width: 15px; height: 14px; }
.formula .fx { font: italic 9px/10px "Liberation Serif", serif; margin-left: 2px; }
.formula .name { width: 51px; }
.formula input { flex: 1; min-width: 0; height: 14px; margin-left: 2px; padding: 0; border: 1px solid #555; border-right: 0; border-bottom: 0; background: #fff; outline: 0; }
.formula .more { width: 19px; height: 16px; font-size: 9px; align-items: flex-start; padding-right: 6px; color: #777; }

.tools { height: 17px; display: flex; border-bottom: 1px solid #999; }
.quick { width: 200px; padding-left: 2px; display: grid; grid-template-columns: 17px 1px 17px 1px 18px 4px 18px 4px 6px 13px 6px 10px 12px 11px 12px 12px 8px 10px 10px; align-items: center; color: #777; }
.quick .more { font-size: 9px; line-height: 8px; padding-bottom: 4px; }
.doc { width: 118px; margin-top: 2px; display: grid; grid-template-columns: 11px 1fr 11px; align-items: center; padding: 0 2px 0 3px; background: #fff; border: 1px solid #b0b0b0; border-bottom: 0; color: #222; }
.doc span { text-align: center; }
.doc button { font-size: 8px; color: #666; }

.work { flex: 1; display: grid; grid-template: minmax(259px, 1fr) 14px / minmax(0, 1fr) 10px; }
.canvas { background: #ababab; display: flex; justify-content: center; align-items: flex-start; overflow: hidden; }
.page text { font: 11px "Liberation Sans", sans-serif; fill: #222; }
.page .heading { font-weight: 700; fill: #111; }
.grid { stroke: #a3a380; stroke-width: 2; }
.vscroll { grid-column: 2; grid-row: 1 / 3; display: flex; flex-direction: column; align-items: center; border-left: 1px solid #888; }
.vscroll button { width: 9px; height: 9px; background: #fff; border: 1px solid #999; }
.vtrack { flex: 1; width: 9px; display: flex; padding: 22px 0 26px; background: #c9c9c9; }
.vthumb { flex: 1; display: flex; align-items: center; justify-content: center; background: linear-gradient(90deg, #f4f4f4, #e4e4e4); border: 1px solid #888; border-left: 0; }
.grip { width: 5px; height: 5px; border: 1px solid #c4c4c4; border-width: 1px 0; }
.tri { width: 0; height: 0; border: 3px solid transparent; }
.up { border-bottom-color: #000; border-top: 0; }
.dn { border-top-color: #000; border-bottom: 0; }
.lt { border-right-color: #000; border-left: 0; }
.rt { border-left-color: #000; border-right: 0; }
.vscroll svg { margin: 1px 0; }
.bottom { display: grid; grid-template-columns: 397px 1fr; border-bottom: 1px solid #e2e2e2; }
.sheets { display: flex; border-top: 1px solid #888; border-right: 1px solid #ccc; color: #333; }
.nav { width: 13px; border-right: 1px solid #bbb; }
.nav:nth-child(4) { width: 16px; }
.sheet { width: 27px; height: 12px; border-right: 1px solid #bbb; }
.sheet.on { width: 34px; background: #fff; border: 1px solid #444; border-top: 0; border-bottom-width: 2px; font-weight: 700; color: #222; }
.add { margin-left: 4px; }
.hscroll { display: flex; padding: 3px 1px 1px 0; }
.hscroll button { width: 10px; background: #fff; border: 1px solid #888; }
.htrack { flex: 1; background: linear-gradient(#d8d8d8, #bdbdbd); border: 1px solid #999; border-width: 1px 0; }

.status { height: 16px; display: flex; align-items: center; color: #333; padding-right: 2px; }
.pane { flex: 1; max-width: 347px; height: 11px; border-right: 1px solid #bbb; margin-right: auto; }
.ins { margin-left: 11px; }
.status .bar { margin: 0 5px 0 10px; }
.status > button { width: 9px; color: #888; }
.auto { margin-right: 8px; }
.status input { appearance: none; width: 65px; height: 9px; margin: 0 1px; background: linear-gradient(#888, #888) 50% 50% / 1px 8px no-repeat, linear-gradient(#aaa, #aaa) 50% 50% / 100% 1px no-repeat; }
.status input::-webkit-slider-thumb { appearance: none; width: 6px; height: 6px; border: 1px solid #888; border-radius: 50%; background: #fff; }
.status output { width: 25px; text-align: right; }
.status .more { width: 17px; font-size: 9px; line-height: 8px; padding-bottom: 5px; margin-left: 2px; }

.taskbar { height: 29px; display: flex; align-items: center; background: linear-gradient(90deg, #2f353a, #2f3337 60%, #352f2e); border-top: 1px solid #54585b; }
.apps { width: 606px; display: flex; height: 28px; }
.apps button { flex: 1; }
.apps .raised { background: #484e53; }
.apps .current { background: #33597a; }
.tray { flex: 1; display: flex; justify-content: space-between; padding: 0 9px 0 23px; align-items: center; }
time { width: 56px; font-size: 17px; line-height: 24px; color: #f3f3f3; }
</style>
